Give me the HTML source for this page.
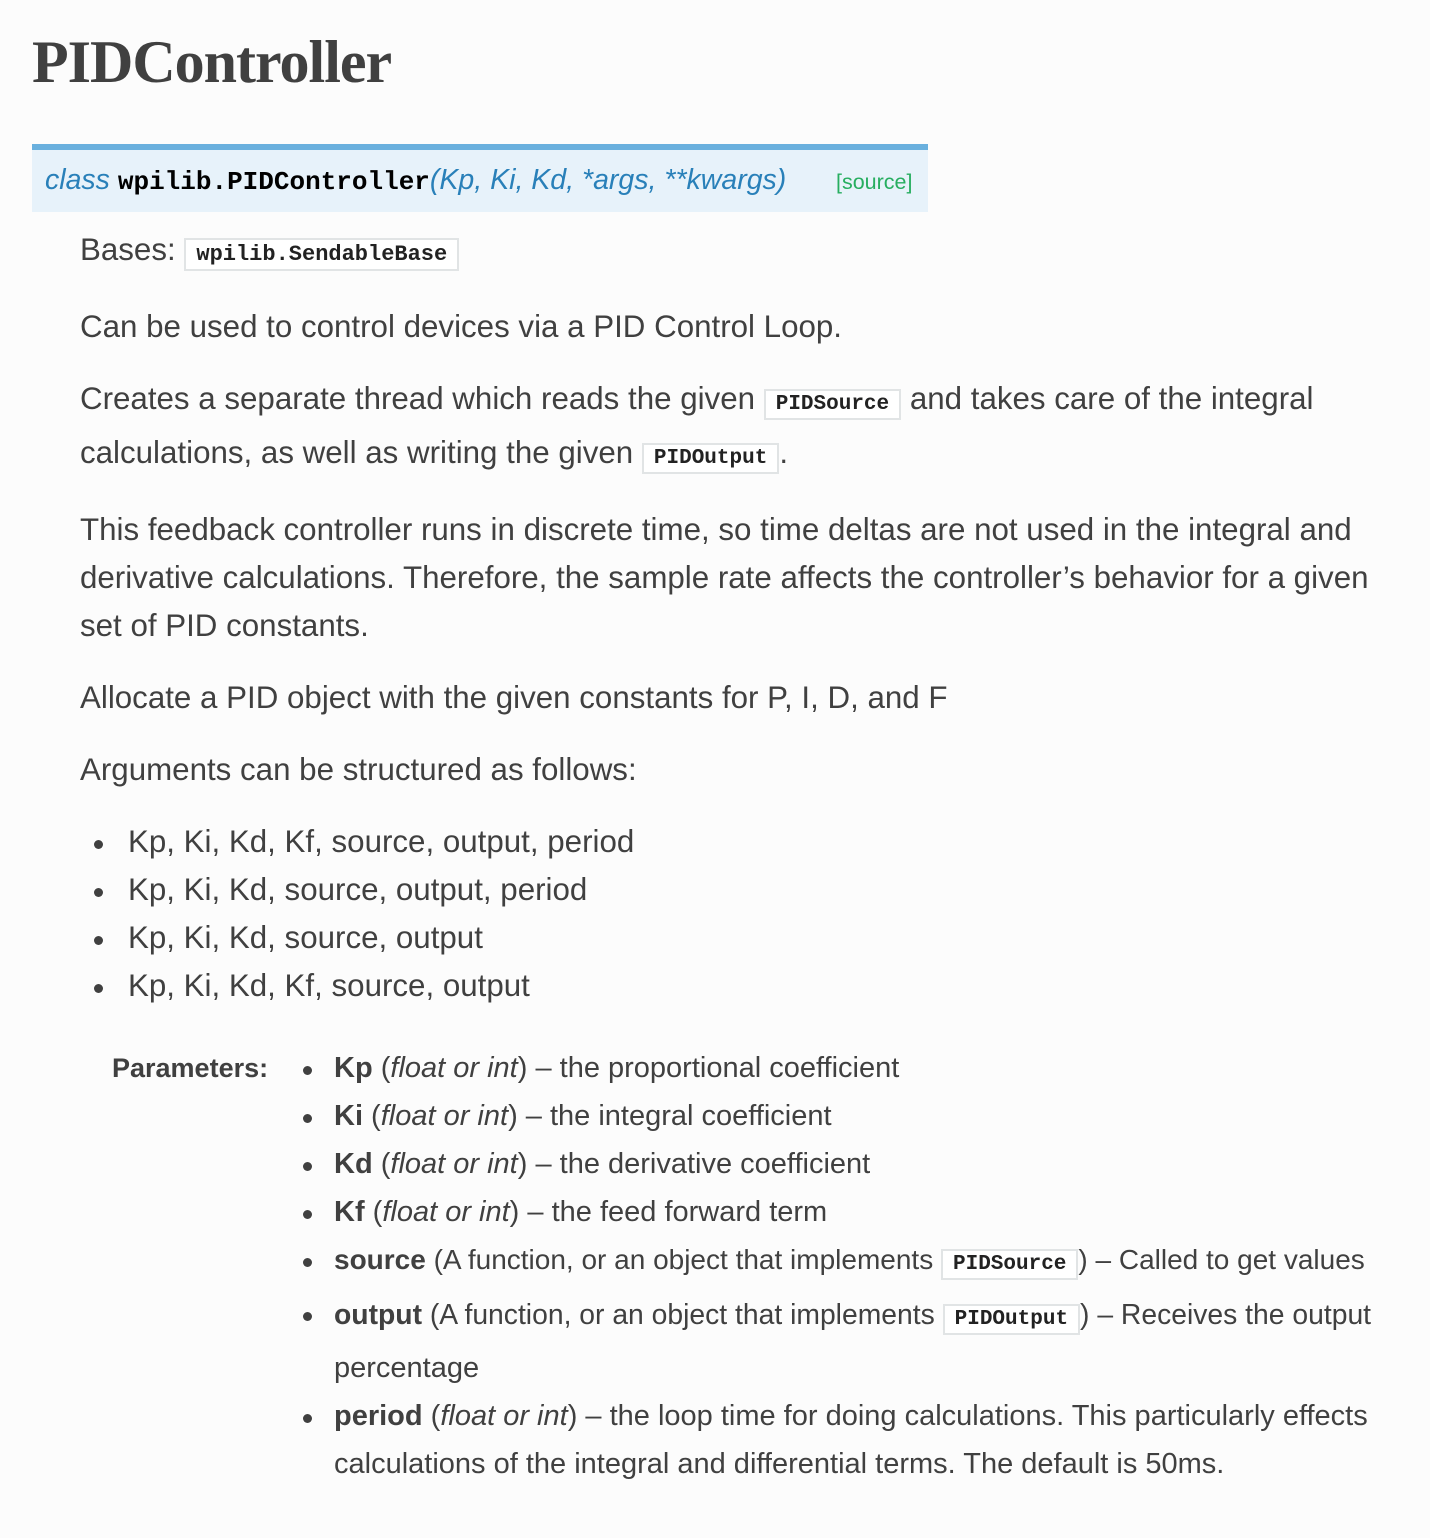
<!DOCTYPE html>
<html><head><meta charset="utf-8"><style>
html,body{margin:0;padding:0;background:#fcfcfc;}
body{width:1430px;height:1538px;position:relative;overflow:hidden;font-family:"Liberation Sans",sans-serif;color:#404040;}
.l{position:absolute;white-space:nowrap;font-size:31.3px;line-height:48px;height:48px;}
.p{font-size:29px;}
h1{position:absolute;left:32px;top:22px;margin:0;font-family:"Liberation Serif",serif;font-weight:bold;font-size:60px;line-height:80px;color:#404040;letter-spacing:-1px;}
.sig{position:absolute;left:32px;top:144px;width:896px;height:62px;background:#e7f2fa;border-top:6px solid #6ab0de;}
.sig .t{position:absolute;left:13px;top:8px;white-space:nowrap;font-size:28.5px;line-height:44px;}
.sig i{color:#2980b9;}
.sig b{font-family:"Liberation Mono",monospace;font-size:26px;color:#000;}
.src{position:absolute;left:804px;top:12px;color:#27ae60;font-size:21.5px;line-height:40px;}
code{font-family:"Liberation Mono",monospace;font-weight:bold;font-size:21px;color:#222;background:#fff;border:2px solid #e1e4e5;padding:2px 10px;}
.b code{font-size:22px;}
.bul{position:absolute;width:9px;height:9px;border-radius:50%;background:#404040;}
</style></head><body>
<h1>PIDController</h1>
<div class="sig"><div class="t"><i>class</i> <b>wpilib.PIDController</b><i>(Kp, Ki, Kd, *args, **kwargs)</i></div><div class="src">[source]</div></div>

<div class="l b" style="left:80px;top:226px">Bases: <code>wpilib.SendableBase</code></div>
<div class="l" style="left:80px;top:303px">Can be used to control devices via a PID Control Loop.</div>
<div class="l" style="left:80px;top:375px">Creates a separate thread which reads the given <code>PIDSource</code> and takes care of the integral</div>
<div class="l" style="left:80px;top:429px">calculations, as well as writing the given <code>PIDOutput</code>.</div>
<div class="l" style="left:80px;top:506px">This feedback controller runs in discrete time, so time deltas are not used in the integral and</div>
<div class="l" style="left:80px;top:554px">derivative calculations. Therefore, the sample rate affects the controller’s behavior for a given</div>
<div class="l" style="left:80px;top:602px">set of PID constants.</div>
<div class="l" style="left:80px;top:674px">Allocate a PID object with the given constants for P, I, D, and F</div>
<div class="l" style="left:80px;top:746px">Arguments can be structured as follows:</div>

<div class="bul" style="left:94px;top:840px"></div><div class="l" style="left:128px;top:818px">Kp, Ki, Kd, Kf, source, output, period</div>
<div class="bul" style="left:94px;top:888px"></div><div class="l" style="left:128px;top:866px">Kp, Ki, Kd, source, output, period</div>
<div class="bul" style="left:94px;top:936px"></div><div class="l" style="left:128px;top:914px">Kp, Ki, Kd, source, output</div>
<div class="bul" style="left:94px;top:984px"></div><div class="l" style="left:128px;top:962px">Kp, Ki, Kd, Kf, source, output</div>

<div class="l" style="left:112px;top:1044px;font-weight:bold;font-size:27px">Parameters:</div>
<div class="bul" style="left:303px;top:1066px"></div><div class="l p" style="left:334px;top:1044px"><b>Kp</b> (<i>float or int</i>) – the proportional coefficient</div>
<div class="bul" style="left:303px;top:1114px"></div><div class="l p" style="left:334px;top:1092px"><b>Ki</b> (<i>float or int</i>) – the integral coefficient</div>
<div class="bul" style="left:303px;top:1162px"></div><div class="l p" style="left:334px;top:1140px"><b>Kd</b> (<i>float or int</i>) – the derivative coefficient</div>
<div class="bul" style="left:303px;top:1210px"></div><div class="l p" style="left:334px;top:1188px"><b>Kf</b> (<i>float or int</i>) – the feed forward term</div>
<div class="bul" style="left:303px;top:1258px"></div><div class="l" style="left:334px;top:1236px;font-size:28px"><b>source</b> (A function, or an object that implements <code>PIDSource</code>) – Called to get values</div>
<div class="bul" style="left:303px;top:1312px"></div><div class="l" style="left:334px;top:1290px;font-size:28.3px"><b>output</b> (A function, or an object that implements <code>PIDOutput</code>) – Receives the output</div>
<div class="l p" style="left:334px;top:1344px">percentage</div>
<div class="bul" style="left:303px;top:1414px"></div><div class="l p" style="left:334px;top:1392px"><b>period</b> (<i>float or int</i>) – the loop time for doing calculations. This particularly effects</div>
<div class="l p" style="left:334px;top:1440px">calculations of the integral and differential terms. The default is 50ms.</div>
</body></html>
